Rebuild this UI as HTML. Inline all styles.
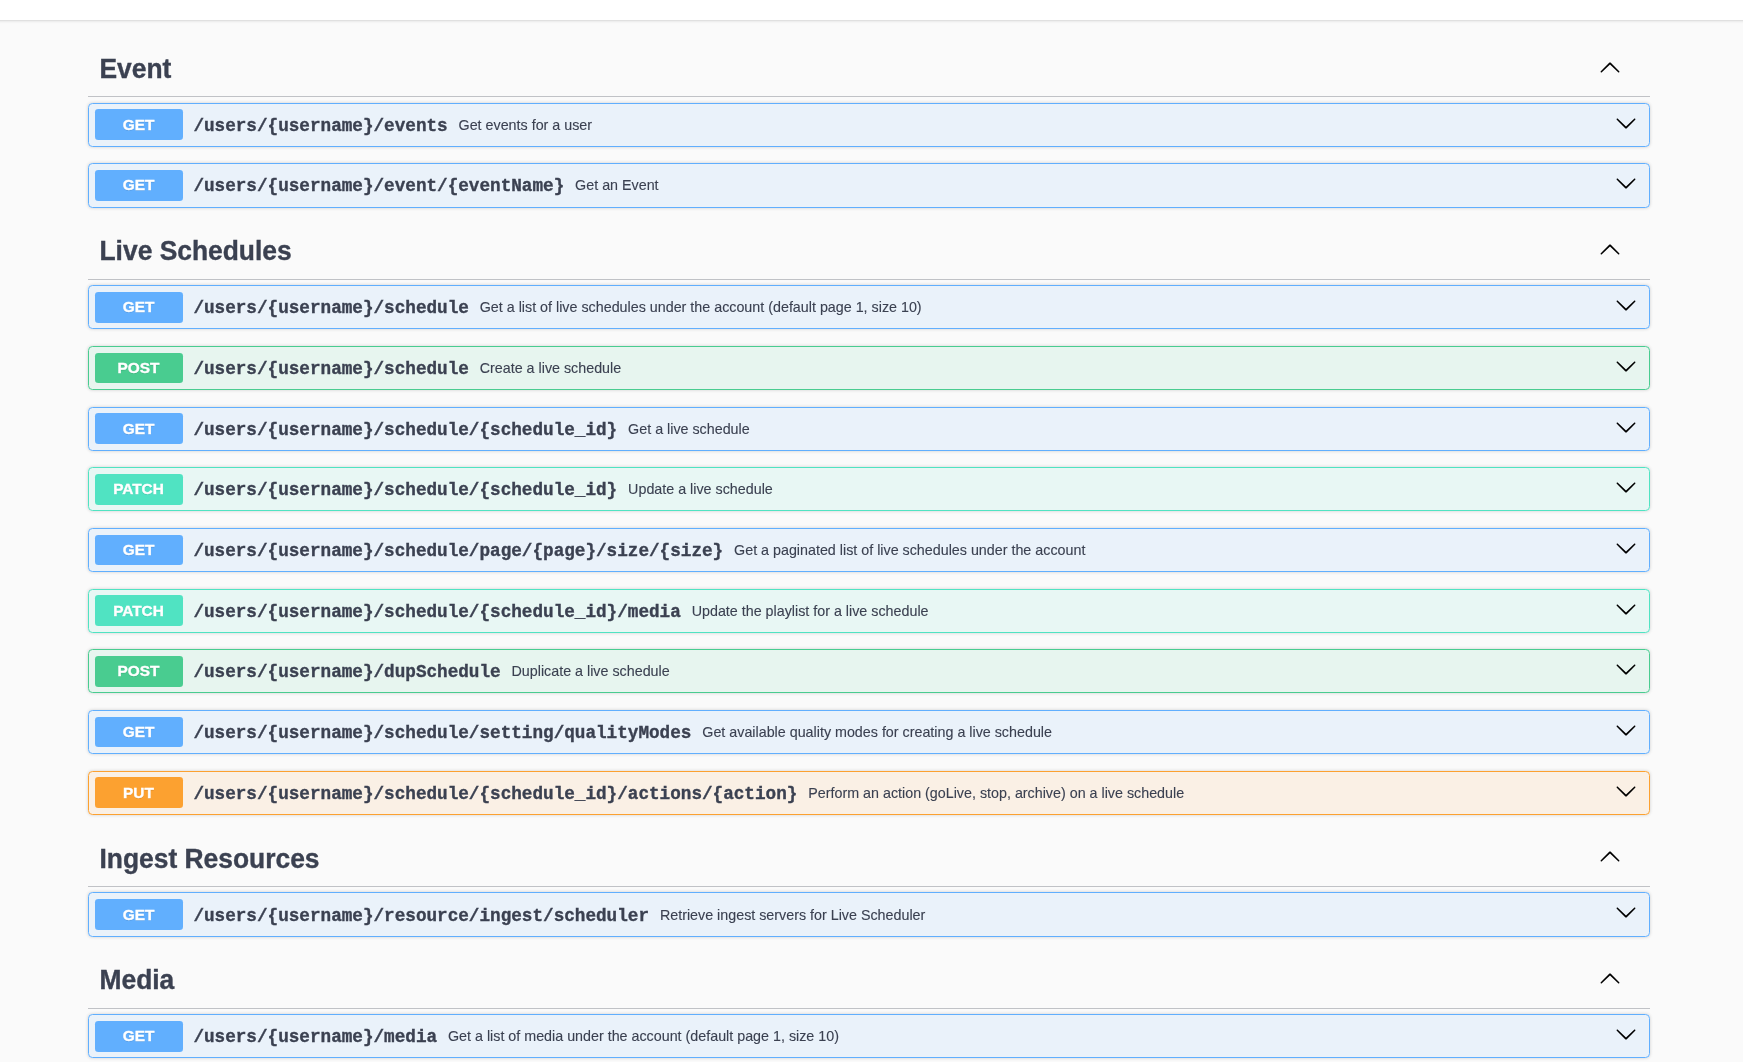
<!DOCTYPE html><html><head><meta charset="utf-8"><title>API</title><style>
html,body{margin:0;padding:0}
body{width:1743px;height:1062px;background:#fafafa;position:relative;overflow:hidden;will-change:transform;-webkit-text-stroke:0.35px currentColor;font-family:"Liberation Sans",sans-serif;color:#3b4151}
.top{position:absolute;left:-10px;top:0;width:1763px;height:20px;background:#fff;box-shadow:0 1px 2px rgba(0,0,0,.07);border-bottom:1px solid #e0e0e0}
.t{position:absolute;left:99.5px;font-weight:700;font-size:26.4px;line-height:30px;white-space:nowrap;transform-origin:0 24px;transform:scaleY(1.055)}
.sep{position:absolute;left:88px;width:1562px;height:1px;background:rgba(59,65,81,.3)}
.ar{position:absolute;width:22px;height:22px}
.ob{position:absolute;left:88px;width:1562px;box-sizing:border-box;border:1px solid;border-radius:4.4px;box-shadow:0 0 3.3px rgba(0,0,0,.19)}
.m{position:absolute;left:94.5px;width:88px;height:30.7px;border-radius:3.3px}
.mt{position:absolute;left:94.5px;width:88px;text-align:center;color:#fff;font-weight:700;font-size:15.4px;line-height:18px;text-shadow:0 1px 0 rgba(0,0,0,.1);transform-origin:0 14px;transform:scaleY(1.0)}
.p{position:absolute;font-family:"Liberation Mono",monospace;font-weight:700;font-size:17.66px;line-height:20px;white-space:nowrap}
.d{position:absolute;font-size:14.3px;line-height:16px;white-space:nowrap;-webkit-text-stroke-width:0.12px}
</style></head><body>
<div class="top"></div>
<div class="t" style="top:54px">Event</div>
<div class="sep" style="top:96.25px"></div>
<div class="ar" style="left:1599.0px;top:57px"><svg width="22" height="22" viewBox="0 0 20 20"><path transform="matrix(1 0 0 -1 0 20)" d="M17.418 6.109c.272-.268.709-.268.979 0s.271.701 0 .969l-7.908 7.83c-.27.268-.707.268-.979 0l-7.908-7.83c-.27-.268-.27-.701 0-.969.271-.268.709-.268.979 0L10 13.25l7.418-7.141z"/></svg></div>
<div class="ob" style="top:102.75px;height:44.17px;border-color:#61affe;background:rgba(97,175,254,.1)"></div>
<div class="m" style="top:109.35px;background:#61affe"></div>
<div class="mt" style="top:116px">GET</div>
<div class="p" style="left:193.4px;top:116px">/users/{username}/events</div>
<div class="d" style="left:458.55px;top:117px">Get events for a user</div>
<div class="ar" style="left:1615.4px;top:112px"><svg width="22" height="22" viewBox="0 0 20 20"><path d="M17.418 6.109c.272-.268.709-.268.979 0s.271.701 0 .969l-7.908 7.83c-.27.268-.707.268-.979 0l-7.908-7.83c-.27-.268-.27-.701 0-.969.271-.268.709-.268.979 0L10 13.25l7.418-7.141z"/></svg></div>
<div class="ob" style="top:163.42px;height:44.17px;border-color:#61affe;background:rgba(97,175,254,.1)"></div>
<div class="m" style="top:170.02px;background:#61affe"></div>
<div class="mt" style="top:176px">GET</div>
<div class="p" style="left:193.4px;top:176px">/users/{username}/event/{eventName}</div>
<div class="d" style="left:575.12px;top:177px">Get an Event</div>
<div class="ar" style="left:1615.4px;top:172px"><svg width="22" height="22" viewBox="0 0 20 20"><path d="M17.418 6.109c.272-.268.709-.268.979 0s.271.701 0 .969l-7.908 7.83c-.27.268-.707.268-.979 0l-7.908-7.83c-.27-.268-.27-.701 0-.969.271-.268.709-.268.979 0L10 13.25l7.418-7.141z"/></svg></div>
<div class="t" style="top:236px">Live Schedules</div>
<div class="sep" style="top:278.75px"></div>
<div class="ar" style="left:1599.0px;top:239px"><svg width="22" height="22" viewBox="0 0 20 20"><path transform="matrix(1 0 0 -1 0 20)" d="M17.418 6.109c.272-.268.709-.268.979 0s.271.701 0 .969l-7.908 7.83c-.27.268-.707.268-.979 0l-7.908-7.83c-.27-.268-.27-.701 0-.969.271-.268.709-.268.979 0L10 13.25l7.418-7.141z"/></svg></div>
<div class="ob" style="top:285.25px;height:44.17px;border-color:#61affe;background:rgba(97,175,254,.1)"></div>
<div class="m" style="top:291.85px;background:#61affe"></div>
<div class="mt" style="top:298px">GET</div>
<div class="p" style="left:193.4px;top:298px">/users/{username}/schedule</div>
<div class="d" style="left:479.74px;top:299px">Get a list of live schedules under the account (default page 1, size 10)</div>
<div class="ar" style="left:1615.4px;top:294px"><svg width="22" height="22" viewBox="0 0 20 20"><path d="M17.418 6.109c.272-.268.709-.268.979 0s.271.701 0 .969l-7.908 7.83c-.27.268-.707.268-.979 0l-7.908-7.83c-.27-.268-.27-.701 0-.969.271-.268.709-.268.979 0L10 13.25l7.418-7.141z"/></svg></div>
<div class="ob" style="top:345.92px;height:44.17px;border-color:#49cc90;background:rgba(73,204,144,.1)"></div>
<div class="m" style="top:352.52px;background:#49cc90"></div>
<div class="mt" style="top:359px">POST</div>
<div class="p" style="left:193.4px;top:359px">/users/{username}/schedule</div>
<div class="d" style="left:479.74px;top:360px">Create a live schedule</div>
<div class="ar" style="left:1615.4px;top:355px"><svg width="22" height="22" viewBox="0 0 20 20"><path d="M17.418 6.109c.272-.268.709-.268.979 0s.271.701 0 .969l-7.908 7.83c-.27.268-.707.268-.979 0l-7.908-7.83c-.27-.268-.27-.701 0-.969.271-.268.709-.268.979 0L10 13.25l7.418-7.141z"/></svg></div>
<div class="ob" style="top:406.58px;height:44.17px;border-color:#61affe;background:rgba(97,175,254,.1)"></div>
<div class="m" style="top:413.18px;background:#61affe"></div>
<div class="mt" style="top:420px">GET</div>
<div class="p" style="left:193.4px;top:420px">/users/{username}/schedule/{schedule_id}</div>
<div class="d" style="left:628.11px;top:421px">Get a live schedule</div>
<div class="ar" style="left:1615.4px;top:416px"><svg width="22" height="22" viewBox="0 0 20 20"><path d="M17.418 6.109c.272-.268.709-.268.979 0s.271.701 0 .969l-7.908 7.83c-.27.268-.707.268-.979 0l-7.908-7.83c-.27-.268-.27-.701 0-.969.271-.268.709-.268.979 0L10 13.25l7.418-7.141z"/></svg></div>
<div class="ob" style="top:467.25px;height:44.17px;border-color:#50e3c2;background:rgba(80,227,194,.1)"></div>
<div class="m" style="top:473.85px;background:#50e3c2"></div>
<div class="mt" style="top:480px">PATCH</div>
<div class="p" style="left:193.4px;top:480px">/users/{username}/schedule/{schedule_id}</div>
<div class="d" style="left:628.11px;top:481px">Update a live schedule</div>
<div class="ar" style="left:1615.4px;top:476px"><svg width="22" height="22" viewBox="0 0 20 20"><path d="M17.418 6.109c.272-.268.709-.268.979 0s.271.701 0 .969l-7.908 7.83c-.27.268-.707.268-.979 0l-7.908-7.83c-.27-.268-.27-.701 0-.969.271-.268.709-.268.979 0L10 13.25l7.418-7.141z"/></svg></div>
<div class="ob" style="top:527.92px;height:44.17px;border-color:#61affe;background:rgba(97,175,254,.1)"></div>
<div class="m" style="top:534.52px;background:#61affe"></div>
<div class="mt" style="top:541px">GET</div>
<div class="p" style="left:193.4px;top:541px">/users/{username}/schedule/page/{page}/size/{size}</div>
<div class="d" style="left:734.09px;top:542px">Get a paginated list of live schedules under the account</div>
<div class="ar" style="left:1615.4px;top:537px"><svg width="22" height="22" viewBox="0 0 20 20"><path d="M17.418 6.109c.272-.268.709-.268.979 0s.271.701 0 .969l-7.908 7.83c-.27.268-.707.268-.979 0l-7.908-7.83c-.27-.268-.27-.701 0-.969.271-.268.709-.268.979 0L10 13.25l7.418-7.141z"/></svg></div>
<div class="ob" style="top:588.59px;height:44.17px;border-color:#50e3c2;background:rgba(80,227,194,.1)"></div>
<div class="m" style="top:595.19px;background:#50e3c2"></div>
<div class="mt" style="top:602px">PATCH</div>
<div class="p" style="left:193.4px;top:602px">/users/{username}/schedule/{schedule_id}/media</div>
<div class="d" style="left:691.70px;top:603px">Update the playlist for a live schedule</div>
<div class="ar" style="left:1615.4px;top:598px"><svg width="22" height="22" viewBox="0 0 20 20"><path d="M17.418 6.109c.272-.268.709-.268.979 0s.271.701 0 .969l-7.908 7.83c-.27.268-.707.268-.979 0l-7.908-7.83c-.27-.268-.27-.701 0-.969.271-.268.709-.268.979 0L10 13.25l7.418-7.141z"/></svg></div>
<div class="ob" style="top:649.25px;height:44.17px;border-color:#49cc90;background:rgba(73,204,144,.1)"></div>
<div class="m" style="top:655.85px;background:#49cc90"></div>
<div class="mt" style="top:662px">POST</div>
<div class="p" style="left:193.4px;top:662px">/users/{username}/dupSchedule</div>
<div class="d" style="left:511.53px;top:663px">Duplicate a live schedule</div>
<div class="ar" style="left:1615.4px;top:658px"><svg width="22" height="22" viewBox="0 0 20 20"><path d="M17.418 6.109c.272-.268.709-.268.979 0s.271.701 0 .969l-7.908 7.83c-.27.268-.707.268-.979 0l-7.908-7.83c-.27-.268-.27-.701 0-.969.271-.268.709-.268.979 0L10 13.25l7.418-7.141z"/></svg></div>
<div class="ob" style="top:709.92px;height:44.17px;border-color:#61affe;background:rgba(97,175,254,.1)"></div>
<div class="m" style="top:716.52px;background:#61affe"></div>
<div class="mt" style="top:723px">GET</div>
<div class="p" style="left:193.4px;top:723px">/users/{username}/schedule/setting/qualityModes</div>
<div class="d" style="left:702.29px;top:724px">Get available quality modes for creating a live schedule</div>
<div class="ar" style="left:1615.4px;top:719px"><svg width="22" height="22" viewBox="0 0 20 20"><path d="M17.418 6.109c.272-.268.709-.268.979 0s.271.701 0 .969l-7.908 7.83c-.27.268-.707.268-.979 0l-7.908-7.83c-.27-.268-.27-.701 0-.969.271-.268.709-.268.979 0L10 13.25l7.418-7.141z"/></svg></div>
<div class="ob" style="top:770.59px;height:44.17px;border-color:#fca130;background:rgba(252,161,48,.1)"></div>
<div class="m" style="top:777.19px;background:#fca130"></div>
<div class="mt" style="top:784px">PUT</div>
<div class="p" style="left:193.4px;top:784px">/users/{username}/schedule/{schedule_id}/actions/{action}</div>
<div class="d" style="left:808.27px;top:785px">Perform an action (goLive, stop, archive) on a live schedule</div>
<div class="ar" style="left:1615.4px;top:780px"><svg width="22" height="22" viewBox="0 0 20 20"><path d="M17.418 6.109c.272-.268.709-.268.979 0s.271.701 0 .969l-7.908 7.83c-.27.268-.707.268-.979 0l-7.908-7.83c-.27-.268-.27-.701 0-.969.271-.268.709-.268.979 0L10 13.25l7.418-7.141z"/></svg></div>
<div class="t" style="top:844px">Ingest Resources</div>
<div class="sep" style="top:885.92px"></div>
<div class="ar" style="left:1599.0px;top:846px"><svg width="22" height="22" viewBox="0 0 20 20"><path transform="matrix(1 0 0 -1 0 20)" d="M17.418 6.109c.272-.268.709-.268.979 0s.271.701 0 .969l-7.908 7.83c-.27.268-.707.268-.979 0l-7.908-7.83c-.27-.268-.27-.701 0-.969.271-.268.709-.268.979 0L10 13.25l7.418-7.141z"/></svg></div>
<div class="ob" style="top:892.42px;height:44.17px;border-color:#61affe;background:rgba(97,175,254,.1)"></div>
<div class="m" style="top:899.02px;background:#61affe"></div>
<div class="mt" style="top:906px">GET</div>
<div class="p" style="left:193.4px;top:906px">/users/{username}/resource/ingest/scheduler</div>
<div class="d" style="left:659.90px;top:907px">Retrieve ingest servers for Live Scheduler</div>
<div class="ar" style="left:1615.4px;top:901px"><svg width="22" height="22" viewBox="0 0 20 20"><path d="M17.418 6.109c.272-.268.709-.268.979 0s.271.701 0 .969l-7.908 7.83c-.27.268-.707.268-.979 0l-7.908-7.83c-.27-.268-.27-.701 0-.969.271-.268.709-.268.979 0L10 13.25l7.418-7.141z"/></svg></div>
<div class="t" style="top:965px">Media</div>
<div class="sep" style="top:1007.75px"></div>
<div class="ar" style="left:1599.0px;top:968px"><svg width="22" height="22" viewBox="0 0 20 20"><path transform="matrix(1 0 0 -1 0 20)" d="M17.418 6.109c.272-.268.709-.268.979 0s.271.701 0 .969l-7.908 7.83c-.27.268-.707.268-.979 0l-7.908-7.83c-.27-.268-.27-.701 0-.969.271-.268.709-.268.979 0L10 13.25l7.418-7.141z"/></svg></div>
<div class="ob" style="top:1014.25px;height:44.17px;border-color:#61affe;background:rgba(97,175,254,.1)"></div>
<div class="m" style="top:1020.85px;background:#61affe"></div>
<div class="mt" style="top:1027px">GET</div>
<div class="p" style="left:193.4px;top:1027px">/users/{username}/media</div>
<div class="d" style="left:447.95px;top:1028px">Get a list of media under the account (default page 1, size 10)</div>
<div class="ar" style="left:1615.4px;top:1023px"><svg width="22" height="22" viewBox="0 0 20 20"><path d="M17.418 6.109c.272-.268.709-.268.979 0s.271.701 0 .969l-7.908 7.83c-.27.268-.707.268-.979 0l-7.908-7.83c-.27-.268-.27-.701 0-.969.271-.268.709-.268.979 0L10 13.25l7.418-7.141z"/></svg></div>
</body></html>
